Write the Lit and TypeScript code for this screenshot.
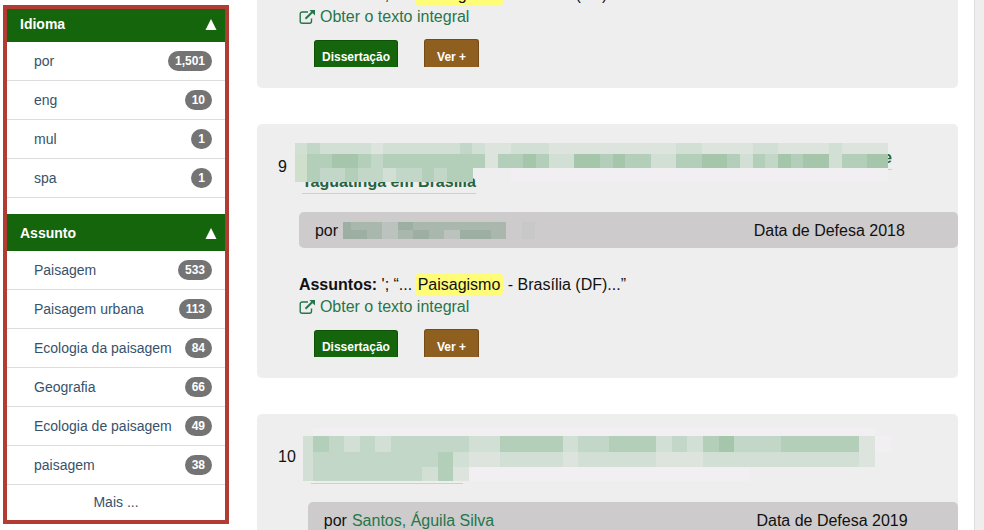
import { LitElement, html, css, svg, nothing } from "lit";
import { customElement, property } from "lit/decorators.js";

interface Facet {
  label: string;
  count: string;
}

interface MosaicRow {
  y: number;
  h: number;
  cells: string;
}

interface MosaicData {
  width: number;
  height: number;
  lead: number;
  cell: number;
  rows: MosaicRow[];
}

const SHADES: Record<string, string> = {
  "1": "#f2eff2",
  "2": "#dde4de",
  "3": "#d2dfd5",
  "4": "#c3d7c8",
  "5": "#b3cfb9",
  "6": "#a5c6aa",
  y: "#d0dfcc",
  a: "#bcc3be",
  b: "#a9b7ad",
  c: "#9dafa3",
  d: "#c9c8c8",
};

const TITLE_NINE: MosaicData = {
  width: 593,
  height: 39,
  lead: 12,
  cell: 12.73,
  rows: [
    { y: 0, h: 11, cells: "34333323333334322333222222222233222233222232222" },
    { y: 11, h: 14, cells: "y5566545555555525565336656553355665354656635566" },
    { y: 25, h: 14, cells: "y5445443445455000111111111111111111111111111111" },
  ],
};

const TITLE_TEN: MosaicData = {
  width: 588,
  height: 53,
  lead: 10,
  cell: 15.6,
  rows: [
    { y: 0, h: 8, cells: "01111111111111111111111111111111111110" },
    { y: 8, h: 16, cells: "35434344444335555344555343564445555521" },
    { y: 24, h: 15, cells: "3444444445322333323333322233333333332" },
    { y: 39, h: 14, cells: "344444443521111111111111111110" },
  ],
};

const AUTHOR_NINE: MosaicData = {
  width: 192,
  height: 17,
  lead: 8,
  cell: 15.5,
  rows: [
    { y: 0, h: 8, cells: "cbbacbbbbbb0d" },
    { y: 8, h: 9, cells: "ccbabcbaccb0d" },
  ],
};

function mosaic(data: MosaicData) {
  const rects = data.rows.flatMap((row) =>
    [...row.cells].map((c, i) => {
      const fill = SHADES[c];
      const x = i === 0 ? 0 : data.lead + (i - 1) * data.cell;
      const w = i === 0 ? data.lead : data.cell;
      return fill
        ? svg`<rect x=${x} y=${row.y} width=${w + 0.3} height=${row.h} fill=${fill}></rect>`
        : nothing;
    })
  );
  return html`<svg
    class="mosaic"
    width=${data.width}
    height=${data.height}
    viewBox="0 0 ${data.width} ${data.height}"
    shape-rendering="crispEdges"
    aria-hidden="true"
  >
    ${rects}
  </svg>`;
}

@customElement("facet-group")
export class FacetGroup extends LitElement {
  @property() heading = "";
  @property({ attribute: false }) items: Facet[] = [];
  @property({ type: Boolean }) more = false;

  static styles = css`
    :host {
      display: block;
    }
    .head {
      display: flex;
      align-items: center;
      justify-content: space-between;
      box-sizing: border-box;
      width: 100%;
      height: 37px;
      padding: 1px 8px 0 13px;
      border: 0;
      background: #15650c;
      color: #fff;
      font: bold 14px/20px "Liberation Sans", Arial, sans-serif;
    }
    .list {
      margin: 0;
      padding: 0;
      list-style: none;
    }
    .item {
      display: flex;
      align-items: center;
      justify-content: space-between;
      height: 38px;
      padding: 0 13px 0 27px;
      border-bottom: 1px solid #dddddf;
    }
    a {
      color: #37526b;
      text-decoration: none;
      white-space: nowrap;
    }
    .badge {
      padding: 0 7px;
      border-radius: 10px;
      background: #747474;
      color: #fff;
      font-size: 12px;
      font-weight: bold;
      line-height: 20px;
    }
    .more {
      height: 35px;
      line-height: 35px;
      text-align: center;
    }
  `;

  render() {
    return html`
      <button class="head" type="button" aria-expanded="true">
        <span>${this.heading}</span>
        <svg width="12" height="11" viewBox="0 0 12 11" aria-hidden="true">
          <path d="M6 0 11.5 11H.5Z" fill="#fff"></path>
        </svg>
      </button>
      <ul class="list">
        ${this.items.map(
          (f) => html`<li class="item">
            <a href="#">${f.label}</a><span class="badge">${f.count}</span>
          </li>`
        )}
        ${this.more
          ? html`<li class="more"><a href="#">Mais ...</a></li>`
          : nothing}
      </ul>
    `;
  }
}

@customElement("app-root")
export class AppRoot extends LitElement {
  static styles = css`
    :host {
      display: flex;
      box-sizing: border-box;
      height: 100vh;
      overflow: hidden;
      background: #fff;
      color: #111;
      font: 16px/22px "Liberation Sans", Arial, sans-serif;
    }
    a {
      color: #26764a;
      text-decoration: none;
    }
    .sidebar {
      flex: none;
      align-self: flex-start;
      width: 218px;
      margin: 5px 28px 0 3px;
      border: 4px solid #b03c33;
      overflow: hidden;
      font-size: 14px;
      line-height: 20px;
    }
    .facets {
      display: flex;
      flex-direction: column;
      gap: 16px;
      margin-top: -4px;
    }
    .results {
      flex: 1;
      min-width: 0;
      display: flex;
      flex-direction: column;
      gap: 36px;
    }
    .card {
      flex: none;
      display: grid;
      grid-template-columns: auto minmax(0, 1fr);
      column-gap: 12px;
      padding: 22px 0 21px 21px;
      border-radius: 5px;
      background: #efeeef;
    }
    .cut {
      display: block;
      margin-top: -16px;
      padding: 0 0 21px 42px;
    }
    .number {
      padding-top: 10px;
    }
    .title {
      position: relative;
      margin: 0 66px 18px 3px;
      font-size: 16px;
      line-height: 22px;
    }
    .title a {
      display: flex;
      flex-direction: column;
      align-items: flex-start;
      color: #24643f;
    }
    .line {
      box-sizing: border-box;
      height: 24px;
      padding-top: 1px;
      border-bottom: 1px solid #cfcfd2;
    }
    .end {
      align-self: flex-end;
    }
    .blank {
      width: 152px;
    }
    .hidden-line {
      border-color: transparent;
    }
    .cover {
      position: absolute;
      display: block;
      left: -7px;
      top: -3px;
    }
    .cover-ten {
      left: -8px;
      top: -8px;
    }
    .mosaic {
      display: block;
    }
    .bar {
      display: grid;
      grid-template-columns: 69% auto;
      align-items: center;
      box-sizing: border-box;
      height: 36px;
      padding-top: 1px;
      border-radius: 5px;
      background: #cdcbcc;
    }
    .author {
      display: flex;
      align-items: center;
      gap: 5px;
      padding-left: 16px;
    }
    .subjects {
      margin: 26px 0 0;
    }
    .cut .subjects {
      margin: 0;
    }
    mark {
      margin-left: -2px;
      padding: 2px 3px;
      border-radius: 3px;
      background: #fffc78;
      color: inherit;
    }
    .full {
      display: flex;
      align-items: center;
      gap: 4px;
    }
    .actions {
      display: flex;
      align-items: flex-end;
      gap: 26px;
      height: 28px;
      margin: 11px 0 0 15px;
    }
    .btn {
      height: 28px;
      padding: 6px 12px 0;
      border: 1px solid #754b18;
      border-bottom: 0;
      border-radius: 3px 3px 0 0;
      background: #8f5f20;
      color: #fff;
      font: bold 12px/20px "Liberation Sans", Arial, sans-serif;
    }
    .kind {
      height: 27px;
      padding: 5px 7px 0;
      border-color: #0d5207;
      background: #15650c;
    }
    .edge {
      flex: none;
      width: 9px;
      margin-left: 16px;
      border-left: 1px solid #dedede;
      background: #eeeeee;
    }
  `;

  private languages: Facet[] = [
    { label: "por", count: "1,501" },
    { label: "eng", count: "10" },
    { label: "mul", count: "1" },
    { label: "spa", count: "1" },
  ];

  private subjects: Facet[] = [
    { label: "Paisagem", count: "533" },
    { label: "Paisagem urbana", count: "113" },
    { label: "Ecologia da paisagem", count: "84" },
    { label: "Geografia", count: "66" },
    { label: "Ecologia de paisagem", count: "49" },
    { label: "paisagem", count: "38" },
  ];

  private details() {
    return html`
      <p class="subjects">
        <b>Assuntos:</b> '; “... <mark>Paisagismo</mark> - Brasília (DF)...”
      </p>
      <a class="full" href="#">
        <svg width="17" height="16" viewBox="0 0 17 16" fill="none" stroke="#26764a" aria-hidden="true">
          <path d="M9 3H3.2A2 2 0 0 0 1.2 5V12.3A2 2 0 0 0 3.2 14.3H10.5A2 2 0 0 0 12.5 12.3V9.5" stroke-width="1.4"></path>
          <path d="M6.5 9.7 13.6 2.8" stroke-width="2"></path>
          <path d="M10.4 1H16V6.6Z" fill="#26764a" stroke="none"></path>
        </svg>
        <span>Obter o texto integral</span>
      </a>
      <div class="actions">
        <button class="btn kind" type="button">Dissertação</button>
        <button class="btn" type="button">Ver +</button>
      </div>
    `;
  }

  render() {
    return html`
      <aside class="sidebar">
        <div class="facets">
          <facet-group heading="Idioma" .items=${this.languages}></facet-group>
          <facet-group heading="Assunto" .items=${this.subjects} more></facet-group>
        </div>
      </aside>
      <main class="results">
        <article class="card cut">${this.details()}</article>
        <article class="card">
          <div class="number">9</div>
          <div>
            <h2 class="title">
              <a href="#">
                <span class="line end">e</span>
                <span class="line">Taguatinga em Brasília</span>
              </a>
              <span class="cover">${mosaic(TITLE_NINE)}</span>
            </h2>
            <div class="bar">
              <span class="author">por ${mosaic(AUTHOR_NINE)}</span>
              <span>Data de Defesa 2018</span>
            </div>
            ${this.details()}
          </div>
        </article>
        <article class="card">
          <div class="number">10</div>
          <div>
            <h2 class="title">
              <a href="#">
                <span class="line hidden-line"></span>
                <span class="line blank"></span>
              </a>
              <span class="cover cover-ten">${mosaic(TITLE_TEN)}</span>
            </h2>
            <div class="bar">
              <span class="author">por <a href="#">Santos, Águila Silva</a></span>
              <span>Data de Defesa 2019</span>
            </div>
            ${this.details()}
          </div>
        </article>
      </main>
      <div class="edge"></div>
    `;
  }
}
